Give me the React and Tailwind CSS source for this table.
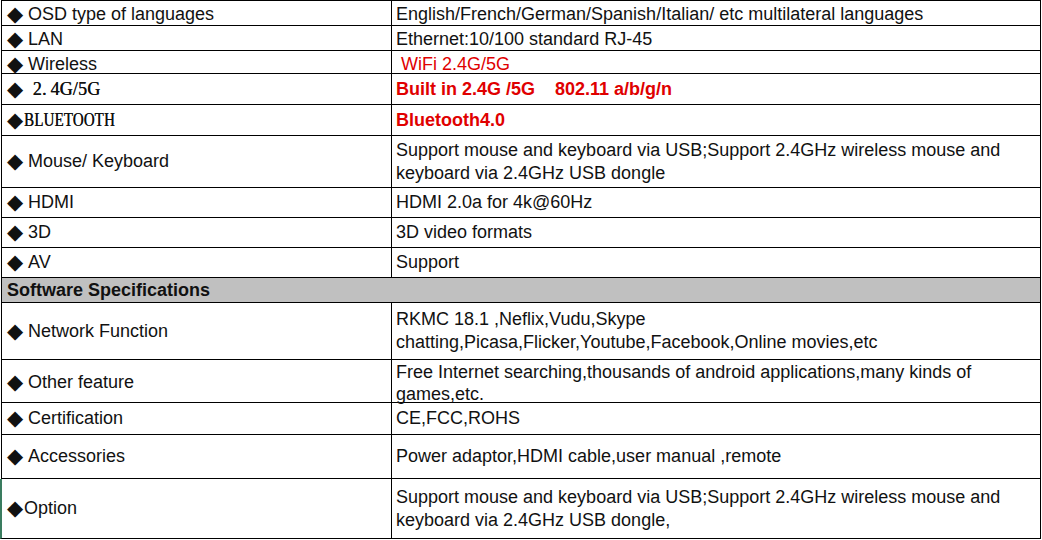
import React from 'react';

// spec sheet rows, heights taken from the sheet grid
const rows = [
  { h: 'h-[25px]', label: 'OSD type of languages', value: ['English/French/German/Spanish/Italian/ etc multilateral languages'] },
  { h: 'h-[25px]', label: 'LAN', value: ['Ethernet:10/100 standard RJ-45'] },
  { h: 'h-[23px]', label: 'Wireless', value: [' WiFi 2.4G/5G'], tone: 'red' },
  {
    h: 'h-[31px]',
    label: ' 2.\u20094G/5G',
    serif: 'scale-x-100',
    value: ['Built in 2.4G /5G    802.11 a/b/g/n'],
    tone: 'redBold',
  },
  { h: 'h-[31px]', label: 'BLUETOOTH', serif: 'scale-x-[0.83]', tight: true, value: ['Bluetooth4.0'], tone: 'redBold' },
  {
    h: 'h-[52px]',
    label: 'Mouse/ Keyboard',
    value: ['Support mouse and keyboard via USB;Support 2.4GHz wireless mouse and', 'keyboard via 2.4GHz USB dongle'],
  },
  { h: 'h-[30px]', label: 'HDMI', value: ['HDMI 2.0a for 4k@60Hz'] },
  { h: 'h-[30px]', label: '3D', value: ['3D video formats'] },
  { h: 'h-[30px]', label: 'AV', value: ['Support'] },
  { header: 'Software Specifications' },
  {
    h: 'h-[57px]',
    label: 'Network Function',
    value: ['RKMC 18.1 ,Neflix,Vudu,Skype', 'chatting,Picasa,Flicker,Youtube,Facebook,Online movies,etc'],
  },
  {
    h: 'h-[43px]',
    label: 'Other feature',
    pad: 'pt-[1px] leading-[22px]',
    value: ['Free Internet searching,thousands of android applications,many kinds of', 'games,etc.'],
  },
  { h: 'h-[32px]', label: 'Certification', value: ['CE,FCC,ROHS'] },
  { h: 'h-[44px]', label: 'Accessories', value: ['Power adaptor,HDMI cable,user manual ,remote'] },
  {
    h: 'h-[60px]',
    label: 'Option',
    tight: true,
    green: true,
    value: ['Support mouse and keyboard via USB;Support 2.4GHz wireless mouse and', 'keyboard via 2.4GHz USB dongle,'],
  },
];

const toneClass = {
  red: 'text-[#e00000]',
  redBold: 'text-[#e00000] font-bold',
};

const SpecRow = ({ row }) => {
  if (row.header) {
    return (
      <div className="h-[25px] border-l border-b border-black bg-[#c0c0c0] flex items-center pl-[5px] font-bold text-[18px] text-[#111]">
        {row.header}
      </div>
    );
  }

  return (
    <div
      className={`${row.h} grid grid-cols-[390px_1fr] border-b border-black ${
        row.green ? '-ml-px border-l-2 border-l-[#3a7c5f]' : 'border-l'
      }`}
    >
      <div className="border-r border-black flex items-center pl-[5px] whitespace-pre text-[#111]">
        <span
          className={`inline-block font-['DejaVu_Sans',sans-serif] text-[21px] leading-none ${
            row.tight ? 'w-[17px]' : 'w-[21px]'
          }`}
        >
          ◆
        </span>
        {row.serif ? (
          <span
            className={`inline-block origin-left ${row.serif} font-['Liberation_Serif',serif] text-[18px] tracking-[0.2px] [text-shadow:0.3px_0_0_#111]`}
          >
            {row.label}
          </span>
        ) : (
          <span>{row.label}</span>
        )}
      </div>
      <div
        className={`flex flex-col justify-center pl-[4px] whitespace-pre text-[#111] ${row.pad || 'leading-[23px]'} ${
          toneClass[row.tone] || ''
        }`}
      >
        {row.value.map((line, i) => (
          <div key={i}>{line}</div>
        ))}
      </div>
    </div>
  );
};

export default function App() {
  return (
    <div className="w-[1042px] h-[540px] bg-white font-['Liberation_Sans',Arial,sans-serif] text-[18px]">
      <div className="ml-px w-[1040px] border-t border-r border-black">
        {rows.map((row, i) => (
          <SpecRow key={i} row={row} />
        ))}
      </div>
    </div>
  );
}
